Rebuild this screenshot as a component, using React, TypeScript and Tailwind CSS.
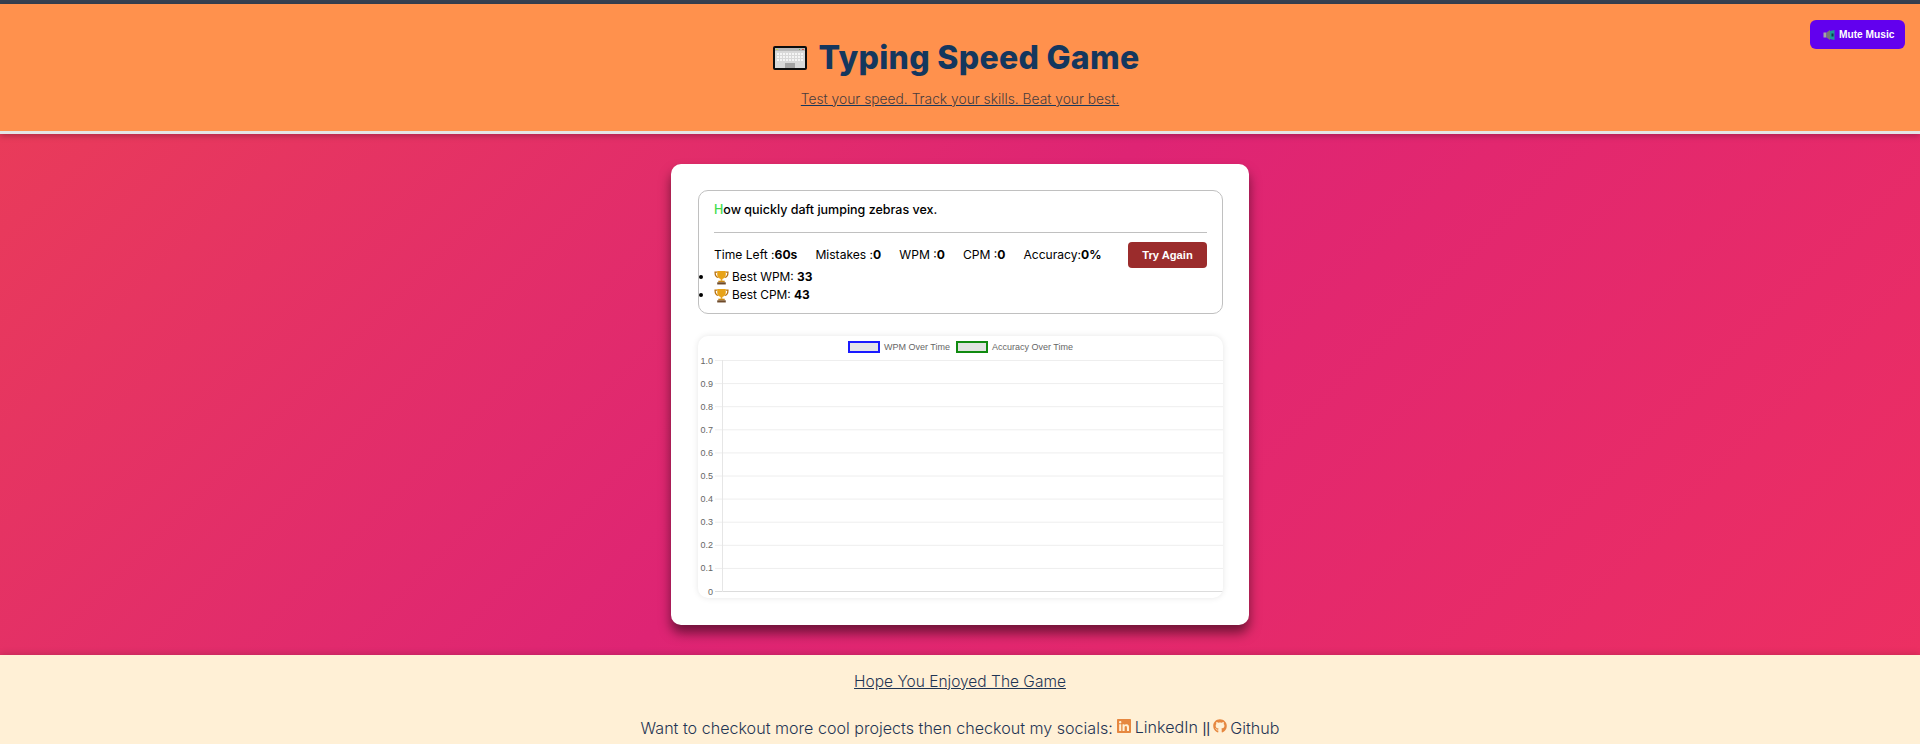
import React from 'react';
import { FaGithub, FaLinkedin } from 'react-icons/fa';

const ticks = ['1.0', '0.9', '0.8', '0.7', '0.6', '0.5', '0.4', '0.3', '0.2', '0.1', '0'];
const keyRows = [7, 10, 13];
const keyCols = [4, 7, 10, 13, 16, 19, 22, 25, 28];

const KeyboardIcon: React.FC = () => (
  <svg width="34" height="24" viewBox="0 0 34 24" className="shrink-0">
    <rect x="0" y="0" width="34" height="24" rx="2" fill="#0d0d0d" />
    <rect x="2" y="2" width="30" height="20" fill="#d8d8d8" />
    <rect x="2" y="2" width="30" height="3" fill="#b9b9b9" />
    <rect x="3" y="3" width="2" height="1" fill="#c8d84a" />
    <rect x="26" y="3" width="1" height="1" fill="#6ab04c" />
    <rect x="29" y="3" width="2" height="1" fill="#e0523f" />
    {keyRows.map((y) =>
      keyCols.map((x) => <rect key={`${x}-${y}`} x={x} y={y} width="2" height="2" fill="#f4f4f4" />),
    )}
    <rect x="12" y="17" width="10" height="5" fill="#a3a3a3" />
  </svg>
);

const SpeakerIcon: React.FC = () => (
  <svg width="12" height="12" viewBox="0 0 12 12" className="shrink-0">
    <rect x="0.5" y="3.5" width="3" height="5" fill="#a5a5a5" />
    <path d="M3.5 3.5 L7 1 V11 L3.5 8.5 Z" fill="#777" />
    <path d="M7 2 L11.5 1 V11 L7 10 Z" fill="#1f9a98" />
    <rect x="8.5" y="4.5" width="2" height="3" fill="#0d3b46" />
  </svg>
);

const TrophyIcon: React.FC = () => (
  <svg width="15" height="15" viewBox="0 0 14 14" className="shrink-0">
    <path d="M3 2 H1 C1 5 2 6.5 4 7 M11 2 H13 C13 5 12 6.5 10 7" fill="none" stroke="#b8720f" strokeWidth="1.2" />
    <path d="M3 1 H11 V4.5 C11 7 9 8 7.8 8.4 V10 H6.2 V8.4 C5 8 3 7 3 4.5 Z" fill="#e8a317" />
    <rect x="4" y="10" width="6" height="1.5" fill="#c98712" />
    <rect x="3" y="11.5" width="8" height="2" fill="#6e4a2a" />
  </svg>
);

const Chart: React.FC = () => (
  <svg width="525" height="244" viewBox="0 0 525 244" className="block">
    {ticks.map((t, i) => {
      const y = 6.5 + i * 23.1;
      return (
        <g key={t}>
          <line x1="17" x2="525" y1={y} y2={y} stroke={i === 10 ? '#dcdcdc' : '#eeeeee'} />
          <text x="15" y={y + 3} textAnchor="end" fontSize="9" fontFamily="'Liberation Sans', sans-serif" fill="#666">
            {t}
          </text>
        </g>
      );
    })}
    <line x1="24.5" x2="24.5" y1="6" y2="238" stroke="#e6e6e6" />
  </svg>
);

export default function App() {
  return (
    <div className="h-screen overflow-hidden flex flex-col font-['Inter',sans-serif] bg-[#fff0d6]">
      <div className="h-1 shrink-0 bg-[#374151]" />

      <header className="relative z-10 h-[130px] shrink-0 flex flex-col items-center bg-[#ff914d] border-b-[3px] border-[#e5e5e5] shadow-[0_2px_6px_rgba(0,0,0,0.25)]">
        <h1 className="mt-[34px] pr-[8px] flex items-center gap-[12px] text-[32px] leading-[40px] font-extrabold tracking-[0.3px] text-[#14375e]">
          <KeyboardIcon />
          Typing Speed Game
        </h1>
        <p className="mt-[11px] text-[13.8px] leading-[20px] font-light text-[#4a3d3d] underline decoration-[#14375e]">
          Test your speed. Track your skills. Beat your best.
        </p>
        <button className="absolute right-[15px] top-[16px] h-[29px] w-[95px] pl-[13px] flex items-center gap-[4px] rounded-[6px] bg-[#6200ee] text-white text-[10.2px] font-bold font-['Liberation_Sans',sans-serif]">
          <SpeakerIcon />
          <span className="pt-[1px]">Mute Music</span>
        </button>
      </header>

      <main className="h-[521px] shrink-0 pt-[30px] flex justify-center bg-[linear-gradient(135deg,#e93b5a_0%,#de2474_47%,#ec2f62_100%)]">
        <div className="w-[578px] h-[461px] pl-[27px] pr-[26px] pt-[26px] rounded-[10px] bg-white shadow-[0_8px_12px_rgba(0,0,0,0.5)]">
          <div className="h-[124px] px-[15px] pt-[10px] rounded-[10px] border border-[#c0c0c0] text-black text-[12.1px] leading-[18px]">
            <p className="font-medium text-[12.5px]">
              <span className="text-[#3fdc4a]">H</span>ow quickly daft jumping zebras vex.
            </p>
            <div className="mt-[13px] border-t border-[#c0c0c0]" />
            <div className="mt-[9px] flex items-center justify-between h-[26px]">
              <div className="flex gap-[18px]">
                <span>Time Left :<b>60s</b></span>
                <span>Mistakes :<b>0</b></span>
                <span>WPM :<b>0</b></span>
                <span>CPM :<b>0</b></span>
                <span>Accuracy:<b>0%</b></span>
              </div>
              <button className="w-[79px] h-[26px] rounded-[4px] bg-[#9b2c2c] text-white text-[11.2px] font-bold font-['Liberation_Sans',sans-serif]">
                Try Again
              </button>
            </div>
            <ul className="list-disc text-[11.9px]">
              <li className="h-[18px]"><span className="inline-flex items-center gap-[3px] h-[18px] align-top"><TrophyIcon /><span>Best WPM: <b>33</b></span></span></li>
              <li className="h-[18px]"><span className="inline-flex items-center gap-[3px] h-[18px] align-top"><TrophyIcon /><span>Best CPM: <b>43</b></span></span></li>
            </ul>
          </div>

          <div className="mt-[22px] h-[262px] rounded-[10px] bg-white shadow-[0_0_6px_rgba(0,0,0,0.1)] overflow-hidden">
            <div className="h-[18px] pt-[4px] flex justify-center gap-[6px] text-[9px] leading-[12px] text-[#666] font-['Liberation_Sans',sans-serif]">
              <span className="flex items-center gap-[4px]"><i className="block w-[32px] h-[12px] bg-[#e4e4e8] border-[2px] border-[#1a1aff]" />WPM Over Time</span>
              <span className="flex items-center gap-[4px]"><i className="block w-[32px] h-[12px] bg-[#dfe3df] border-[2px] border-[#108a10]" />Accuracy Over Time</span>
            </div>
            <Chart />
          </div>
        </div>
      </main>

      <footer className="relative z-10 flex-1 flex flex-col items-center text-[#1f3554] bg-[#fff0d6] shadow-[0_-2px_6px_rgba(0,0,0,0.12)] font-light">
        <p className="mt-[15px] text-[15.5px] leading-[24px] underline">Hope You Enjoyed The Game</p>
        <p className="mt-[21px] text-[16.1px] leading-[24px] flex items-center gap-[3px]">
          Want to checkout more cool projects then checkout my socials:
          <FaLinkedin className="text-[#e6873f] text-[16px] -mt-1" />
          <span>LinkedIn <span className="font-['Liberation_Sans',sans-serif] text-[15px]">||</span></span>
          <FaGithub className="text-[#e6873f] text-[14px] -mt-1" />
          Github
        </p>
      </footer>
    </div>
  );
}
